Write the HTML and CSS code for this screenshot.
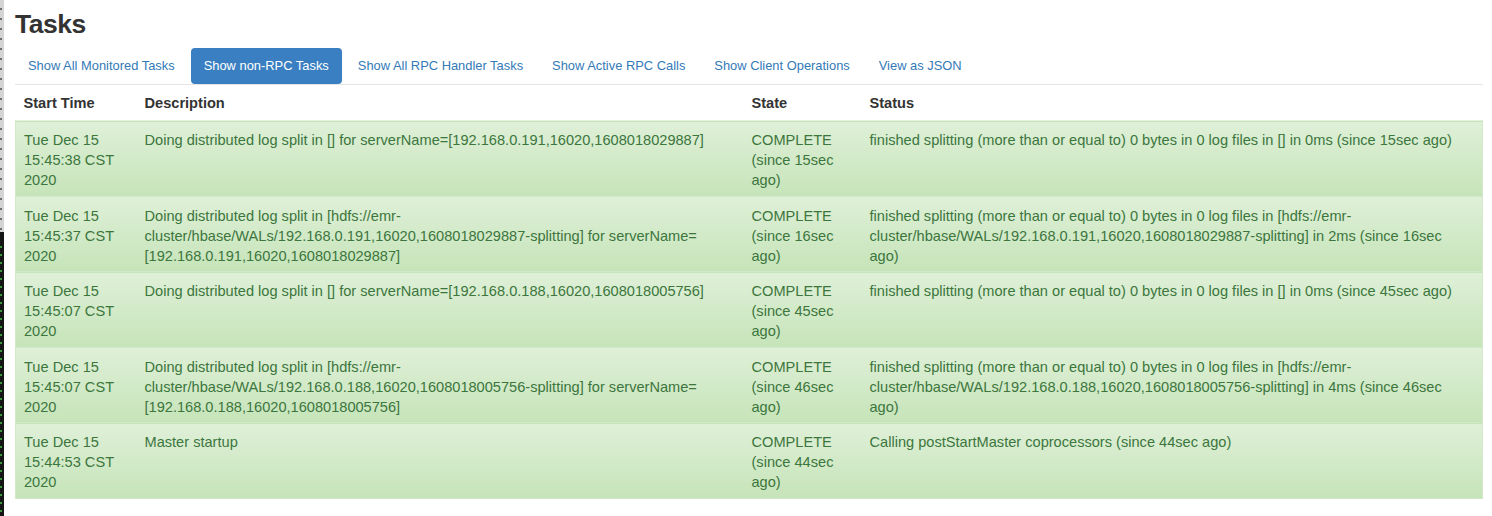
FILE: index.html
```html
<!DOCTYPE html>
<html lang="en">
<head>
<meta charset="utf-8">
<title>Tasks</title>
<link rel="stylesheet" href="styles.css">
</head>
<body>
<div class="page">
  <div class="edge"></div>
  <main class="content">
    <h1 class="title">Tasks</h1>
    <ul class="nav">
      <li class="nav-item"><a href="#">Show All Monitored Tasks</a></li>
      <li class="nav-item active"><a href="#">Show non-RPC Tasks</a></li>
      <li class="nav-item"><a href="#">Show All RPC Handler Tasks</a></li>
      <li class="nav-item"><a href="#">Show Active RPC Calls</a></li>
      <li class="nav-item"><a href="#">Show Client Operations</a></li>
      <li class="nav-item"><a href="#">View as JSON</a></li>
    </ul>
    <table class="tasks">
      <colgroup>
        <col class="c-time">
        <col class="c-desc">
        <col class="c-state">
        <col class="c-status">
      </colgroup>
      <thead>
        <tr><th>Start Time</th><th>Description</th><th>State</th><th>Status</th></tr>
      </thead>
      <tbody>
        <tr class="success">
          <td>Tue Dec 15 15:45:38 CST 2020</td>
          <td>Doing distributed log split in [] for serverName=[192.168.0.191,16020,1608018029887]</td>
          <td>COMPLETE (since 15sec ago)</td>
          <td>finished splitting (more than or equal to) 0 bytes in 0 log files in [] in 0ms (since 15sec ago)</td>
        </tr>
        <tr class="success">
          <td>Tue Dec 15 15:45:37 CST 2020</td>
          <td>Doing distributed log split in [hdfs://emr-cluster/hbase/WALs/192.168.0.191,16020,1608018029887-splitting] for serverName=[192.168.0.191,16020,1608018029887]</td>
          <td>COMPLETE (since 16sec ago)</td>
          <td>finished splitting (more than or equal to) 0 bytes in 0 log files in [hdfs://emr-cluster/hbase/WALs/192.168.0.191,16020,1608018029887-splitting] in 2ms (since 16sec ago)</td>
        </tr>
        <tr class="success">
          <td>Tue Dec 15 15:45:07 CST 2020</td>
          <td>Doing distributed log split in [] for serverName=[192.168.0.188,16020,1608018005756]</td>
          <td>COMPLETE (since 45sec ago)</td>
          <td>finished splitting (more than or equal to) 0 bytes in 0 log files in [] in 0ms (since 45sec ago)</td>
        </tr>
        <tr class="success">
          <td>Tue Dec 15 15:45:07 CST 2020</td>
          <td>Doing distributed log split in [hdfs://emr-cluster/hbase/WALs/192.168.0.188,16020,1608018005756-splitting] for serverName=[192.168.0.188,16020,1608018005756]</td>
          <td>COMPLETE (since 46sec ago)</td>
          <td>finished splitting (more than or equal to) 0 bytes in 0 log files in [hdfs://emr-cluster/hbase/WALs/192.168.0.188,16020,1608018005756-splitting] in 4ms (since 46sec ago)</td>
        </tr>
        <tr class="success">
          <td>Tue Dec 15 15:44:53 CST 2020</td>
          <td>Master startup</td>
          <td>COMPLETE (since 44sec ago)</td>
          <td>Calling postStartMaster coprocessors (since 44sec ago)</td>
        </tr>
      </tbody>
    </table>
  </main>
</div>
</body>
</html>
```
FILE: styles.css
```css
* { box-sizing: border-box; }

html, body {
  margin: 0;
  padding: 0;
  background: #fff;
}

body {
  font-family: "Liberation Sans", Arial, Helvetica, sans-serif;
  color: #333;
  font-size: 14.5px;
}

.page {
  display: flex;
  min-height: 516px;
}

.edge {
  flex: none;
  width: 4px;
  background:
    repeating-linear-gradient(to bottom, transparent 0 8px, rgba(40,40,40,0.6) 8px 10px) left top / 2px 232px no-repeat,
    repeating-linear-gradient(to bottom, transparent 0 6px, #3a9a3a 6px 8px) left 240px / 2px 276px no-repeat,
    linear-gradient(to bottom, #d4d4d4 0 232px, #151515 232px 100%);
}

.content {
  flex: 1;
  min-width: 0;
  padding: 0 9px 0 11px;
}

.title {
  margin: 8px 0 8px;
  font-size: 26.5px;
  line-height: 32px;
  font-weight: bold;
  letter-spacing: -0.5px;
  color: #333;
}

.nav {
  list-style: none;
  margin: 0;
  padding: 0;
  display: flex;
  gap: 3px;
  border-bottom: 1px solid #e5e5e5;
}

.nav-item a {
  display: block;
  padding: 10px 13px;
  font-size: 12.9px;
  line-height: 16px;
  color: #337ab7;
  text-decoration: none;
  border-radius: 4px;
}

.nav-item.active a {
  background: #3a7fc1;
  color: #fff;
}

.tasks {
  width: 100%;
  border-collapse: collapse;
  table-layout: fixed;
}

.c-time { width: 121px; }
.c-desc { width: 607px; }
.c-state { width: 118px; }

.tasks th {
  text-align: left;
  font-weight: bold;
  font-size: 14.6px;
  line-height: 20px;
  padding: 8px 8px 7px;
  color: #333;
  vertical-align: bottom;
}

.tasks td {
  padding: 9px 8px 5.5px;
  line-height: 20px;
  vertical-align: top;
  color: #3c763d;
  font-size: 14.6px;
}

.tasks tbody tr.success {
  background: linear-gradient(to bottom, #dff0d8 0%, #c6e4b9 100%);
  border: 1px solid #d3e8c9;
  border-top: 1px solid #e6f2e0;
}
```
